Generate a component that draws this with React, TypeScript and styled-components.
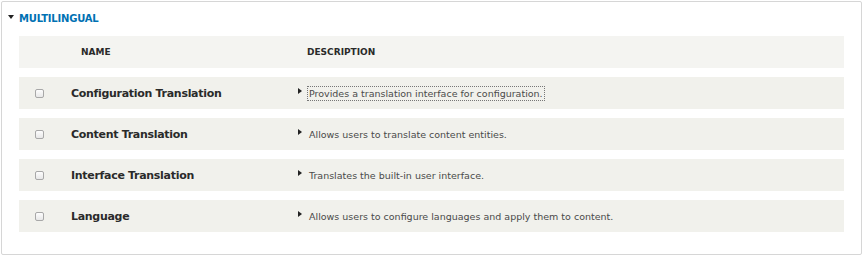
import styled, { createGlobalStyle } from 'styled-components';

const GlobalStyle = createGlobalStyle`
  html, body {
    margin: 0;
    padding: 0;
    background: #ffffff;
  }
  body {
    font-family: 'DejaVu Sans', Verdana, sans-serif;
    color: #333;
  }
`;

interface Module {
  name: string;
  description: string;
  focused?: boolean;
}

const modules: Module[] = [
  { name: 'Configuration Translation', description: 'Provides a translation interface for configuration.', focused: true },
  { name: 'Content Translation', description: 'Allows users to translate content entities.' },
  { name: 'Interface Translation', description: 'Translates the built-in user interface.' },
  { name: 'Language', description: 'Allows users to configure languages and apply them to content.' },
];

const Panel = styled.fieldset`
  box-sizing: border-box;
  margin: 1px;
  width: 861px;
  height: 254px;
  border: 1px solid #d6d6d6;
  border-radius: 2px;
  padding: 0 16px 0 16px;
  min-width: 0;
`;

const Legend = styled.div`
  display: flex;
  align-items: center;
  height: 32px;
  margin-left: -10px;
  gap: 5px;
`;

const Caret = styled.span`
  width: 0;
  height: 0;
  border-left: 3px solid transparent;
  border-right: 3px solid transparent;
  border-top: 4px solid #222;
  margin-top: -2px;
`;

const LegendText = styled.span`
  font-size: 10px;
  font-weight: bold;
  color: #0071b3;
  text-transform: uppercase;
  letter-spacing: -0.2px;
`;

const Table = styled.div`
  display: flex;
  flex-direction: column;
  gap: 9px;
  margin-top: 2px;
  margin-left: 1px;
  width: 825px;
`;

const Row = styled.div<{ $head?: boolean }>`
  display: flex;
  align-items: center;
  height: 32px;
  background: ${p => (p.$head ? '#f4f4f1' : '#f1f1ec')};
`;

const CheckCell = styled.div`
  width: 52px;
  display: flex;
  padding-left: 16px;
  box-sizing: border-box;
`;

const Checkbox = styled.span`
  box-sizing: border-box;
  width: 9px;
  height: 9px;
  border: 1px solid #a8a8a8;
  border-radius: 2px;
  background: linear-gradient(#fdfdfd, #e8e8e8);
`;

const NameCell = styled.div<{ $head?: boolean }>`
  width: 227px;
  box-sizing: border-box;
  padding-left: ${p => (p.$head ? 10 : 0)}px;
  font-weight: bold;
  font-size: ${p => (p.$head ? 9 : 11)}px;
  color: #2a2a2a;
  letter-spacing: ${p => (p.$head ? 0 : -0.3)}px;
`;

const HeadDesc = styled.div`
  padding-left: 9px;
  font-weight: bold;
  font-size: 9px;
  color: #2a2a2a;
`;

const DescCell = styled.div`
  display: flex;
  align-items: center;
  gap: 6px;
`;

const Arrow = styled.span`
  width: 0;
  height: 0;
  border-top: 3px solid transparent;
  border-bottom: 3px solid transparent;
  border-left: 4px solid #222;
  margin-top: -4px;
`;

const DescText = styled.span<{ $focused?: boolean }>`
  font-size: 9.5px;
  color: #4a4a4a;
  padding: 1px 1px;
  outline: ${p => (p.$focused ? '1px dotted #777' : 'none')};
`;

export default function App() {
  return (
    <>
      <GlobalStyle />
      <Panel>
        <Legend>
          <Caret />
          <LegendText>Multilingual</LegendText>
        </Legend>
        <Table>
          <Row $head>
            <CheckCell />
            <NameCell $head>NAME</NameCell>
            <HeadDesc>DESCRIPTION</HeadDesc>
          </Row>
          {modules.map(m => (
            <Row key={m.name}>
              <CheckCell>
                <Checkbox />
              </CheckCell>
              <NameCell>{m.name}</NameCell>
              <DescCell>
                <Arrow />
                <DescText $focused={m.focused}>{m.description}</DescText>
              </DescCell>
            </Row>
          ))}
        </Table>
      </Panel>
    </>
  );
}
